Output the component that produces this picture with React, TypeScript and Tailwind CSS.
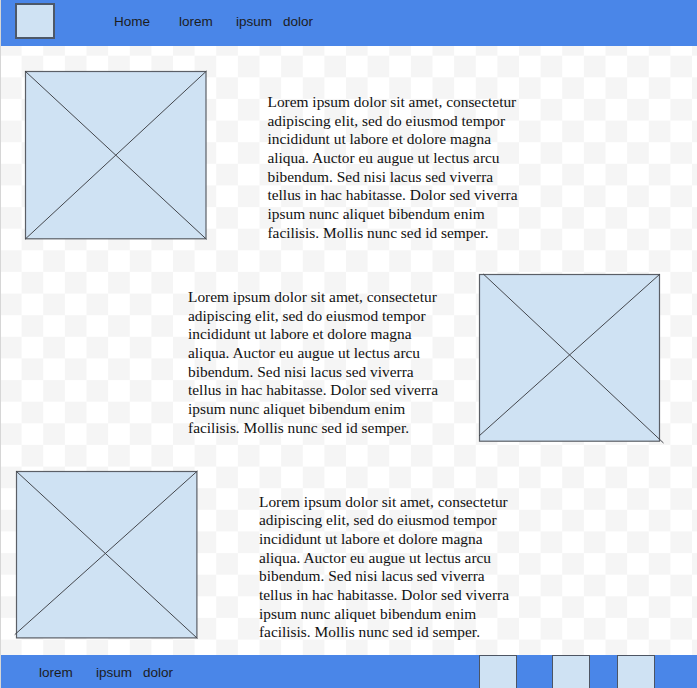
import React from "react";

type Line = [number, number, number, number];

function Placeholder({ w, h, lines }: { w: number; h: number; lines: Line[] }) {
  return (
    <div className="shrink-0" style={{ width: w, height: h }}>
      <svg width={w} height={h} className="block overflow-visible">
        <rect x={0.5} y={0.5} width={w - 1} height={h - 1} fill="#cfe2f3" stroke="#5b5f66" strokeWidth={1.2} />
        {lines.map((l, i) => (
          <line key={i} x1={l[0]} y1={l[1]} x2={l[2]} y2={l[3]} stroke="#44474d" strokeWidth={1} />
        ))}
      </svg>
    </div>
  );
}

const TEXT =
  "Lorem ipsum dolor sit amet, consectetur adipiscing elit, sed do eiusmod tempor incididunt ut labore et dolore magna aliqua. Auctor eu augue ut lectus arcu bibendum. Sed nisi lacus sed viverra tellus in hac habitasse. Dolor sed viverra ipsum nunc aliquet bibendum enim facilisis. Mollis nunc sed id semper.";

function Para({ className }: { className: string }) {
  return (
    <p
      className={
        "w-[257px] shrink-0 font-['Liberation_Serif',_'Times_New_Roman',_serif] text-[15.4px] leading-[18.65px] text-[#111] " +
        className
      }
    >
      {TEXT}
    </p>
  );
}

export default function App() {
  return (
    <div className="w-[697px] h-[688px] overflow-hidden border-l border-[#d6d6d6] bg-origin-border bg-[image:repeating-conic-gradient(#ffffff_0_25%,#f5f5f5_0_50%)] bg-[length:43.26px_43.26px] bg-[position:0_-9.19px] flex flex-col">
      <header className="h-[46px] shrink-0 bg-[#4a86e8] flex items-start font-['Liberation_Sans',_Arial,_sans-serif] text-[13.5px] leading-[16px] text-[#1c1c1c]">
        <div className="ml-[14px] mt-[3px] w-[40px] h-[36px] bg-[#cfe2f3] border-2 border-[#4d5868]" />
        <nav className="flex ml-[59px] mt-[14.3px]">
          <span className="w-[65px]">Home</span>
          <span className="w-[57px]">lorem</span>
          <span className="w-[47px]">ipsum</span>
          <span>dolor</span>
        </nav>
      </header>

      <main className="h-[608.5px] shrink-0 flex flex-col">
        <div className="flex items-start h-[170px] mt-[24.7px] shrink-0">
          <div className="ml-[24.3px]">
            <Placeholder w={181.5} h={168.3} lines={[[0, 0, 181.5, 168.3], [0, 168.3, 181.5, 0]]} />
          </div>
          <Para className="ml-[60.7px] mt-[22.4px]" />
        </div>

        <div className="flex items-start h-[168px] mt-[33.3px] shrink-0">
          <Para className="ml-[187px] mt-[14.1px]" />
          <div className="ml-[33.7px]">
            <Placeholder w={181} h={167.7} lines={[[4.3, 0, 184.5, 169], [0, 162, 181, 0]]} />
          </div>
        </div>

        <div className="flex items-start h-[168px] mt-[29.3px] shrink-0">
          <div className="ml-[15.3px]">
            <Placeholder w={181.4} h={167.4} lines={[[0, 0, 181.4, 167.4], [-1.3, 163.7, 181.4, 0]]} />
          </div>
          <Para className="ml-[61.3px] mt-[21.4px]" />
        </div>
      </main>

      <footer className="h-[40px] shrink-0 bg-[#4a86e8] flex items-start font-['Liberation_Sans',_Arial,_sans-serif] text-[13.5px] leading-[16px] text-[#1c1c1c]">
        <div className="w-[477.7px] pl-[38px] flex mt-[10.3px]">
          <span className="w-[57px]">lorem</span>
          <span className="w-[47px]">ipsum</span>
          <span>dolor</span>
        </div>
        <div className="w-[38px] h-[40px] bg-[#cfe2f3] border border-[#4d5563]" />
        <div className="ml-[35px] w-[38px] h-[40px] bg-[#cfe2f3] border border-[#4d5563]" />
        <div className="ml-[27.6px] w-[38px] h-[40px] bg-[#cfe2f3] border border-[#4d5563]" />
      </footer>
    </div>
  );
}
